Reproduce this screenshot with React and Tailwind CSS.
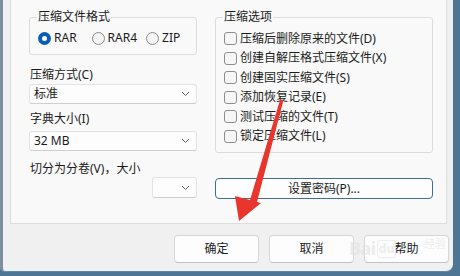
const font = "font-['Noto_Sans','Noto_Sans_CJK_SC',sans-serif]";

function Chevron() {
  return (
    <svg width="9" height="6" viewBox="0 0 9 6" className="shrink-0">
      <path d="M1 1l3.5 3.5L8 1" fill="none" stroke="#5f5f5f" strokeWidth="1" />
    </svg>
  );
}

function Select({ value, className = '' }) {
  return (
    <div
      className={`flex items-center justify-between rounded-[3px] border border-[#e3e3e3] border-b-[#cfcfcf] bg-[#fdfdfd] pl-[4px] pr-[6px] ${className}`}
    >
      <span className="text-[12px] leading-4 text-[#1b1b1b]">{value}</span>
      <Chevron />
    </div>
  );
}

function Radio({ label, checked }) {
  return (
    <div className="flex items-center gap-[3px]">
      {checked ? (
        <span className="flex h-[13px] w-[13px] items-center justify-center rounded-full bg-[#0a5fb4]">
          <span className="h-[5px] w-[5px] rounded-full bg-white" />
        </span>
      ) : (
        <span className="h-[13px] w-[13px] rounded-full border border-[#8b8b8b] bg-[#f4f4f4]" />
      )}
      <span className="text-[12px] leading-4 text-[#1b1b1b]">{label}</span>
    </div>
  );
}

function Check({ label }) {
  return (
    <div className="flex h-[19.5px] items-center gap-[3px]">
      <span className="h-[13px] w-[13px] rounded-[3px] border border-[#8d8d8d] bg-[#f6f6f6]" />
      <span className="text-[12px] leading-4 text-[#1b1b1b]">{label}</span>
    </div>
  );
}

function Button({ children }) {
  return (
    <button className="h-[28px] w-[85px] rounded-[4px] border border-[#d6d6d6] border-b-[#c2c2c2] bg-[#fdfdfd] text-[12px] leading-4 text-[#1b1b1b]">
      {children}
    </button>
  );
}

const options = [
  '压缩后删除原来的文件(D)',
  '创建自解压格式压缩文件(X)',
  '创建固实压缩文件(S)',
  '添加恢复记录(E)',
  '测试压缩的文件(T)',
  '锁定压缩文件(L)',
];

export default function App() {
  return (
    <div className={`relative h-[276px] w-[460px] overflow-hidden bg-[#4f7594] ${font}`}>
      <div className="flex h-[272px] w-[453px] flex-col rounded-br-[7px] rounded-bl-[5px] border-b border-l-[3px] border-b-[#5a8bb0] border-l-[#7d909f] bg-[#f0f0f0]">
        <div className="ml-[7px] flex h-[224px] w-[437px] border-x border-b border-[#dedede] bg-[#f9f9f9] pl-[18px]">
          <div className="flex w-[168px] flex-col">
            <fieldset className="mt-[9px] rounded-[3px] border border-[#dcdcdc] px-[8px] pt-[5px] pb-[8px]">
              <legend className="px-[1px] -ml-[1px] text-[12px] leading-4 text-[#1b1b1b]">压缩文件格式</legend>
              <div className="flex items-center">
                <Radio label="RAR" checked />
                <div className="ml-[15px]">
                  <Radio label="RAR4" />
                </div>
                <div className="ml-[9px]">
                  <Radio label="ZIP" />
                </div>
              </div>
            </fieldset>

            <div className="mt-[12px] pl-[1px] text-[12px] leading-4 text-[#1b1b1b]">压缩方式(C)</div>
            <Select value="标准" className="mt-[1px] h-[20px]" />

            <div className="mt-[7px] pl-[1px] text-[12px] leading-4 text-[#1b1b1b]">字典大小(I)</div>
            <Select value="32 MB" className="mt-[4px] h-[20px]" />

            <div className="mt-[10px] pl-[1px] text-[12px] leading-4 text-[#1b1b1b]">切分为分卷(V)，大小</div>
            <Select value="" className="ml-auto h-[21px] w-[45px]" />
          </div>

          <div className="ml-[18px] flex w-[218px] flex-col">
            <fieldset className="mt-[9px] h-[144px] rounded-[3px] border border-[#dcdcdc] pl-[8px] pt-[4px]">
              <legend className="-ml-[1px] px-[1px] text-[12px] leading-4 text-[#1b1b1b]">压缩选项</legend>
              {options.map((o) => (
                <Check key={o} label={o} />
              ))}
            </fieldset>
            <button className="mt-[25px] h-[21px] w-[218px] rounded-[4px] border border-[#3d6f88] bg-[#fdfdfd] text-[12px] leading-4 text-[#1b1b1b]">
              设置密码(P)...
            </button>
          </div>
        </div>

        <div className="mt-[11px] flex justify-end gap-[10px] pr-[4px]">
          <Button>确定</Button>
          <Button>取消</Button>
          <Button>帮助</Button>
        </div>
      </div>

      <div className="pointer-events-none absolute left-[349px] top-[238px] flex items-end text-[#e2e2e2] opacity-60">
        <span className="text-[18px] font-bold leading-5 tracking-tight">Bai</span>
        <span className="ml-[1px] rounded-[3px] border border-[#e2e2e2] px-[1px] text-[12px] font-bold leading-4">du</span>
      </div>
      <div className="pointer-events-none absolute left-[424px] top-[236px] text-[11px] leading-4 text-[#e2e2e2] opacity-60">
        经验
      </div>

      <svg className="pointer-events-none absolute left-0 top-0" width="460" height="276" viewBox="0 0 460 276">
        <polygon
          points="280,100 283.5,100 257,202 261,203 239,221 235,196 250,200"
          fill="#e8352e"
        />
      </svg>
    </div>
  );
}
